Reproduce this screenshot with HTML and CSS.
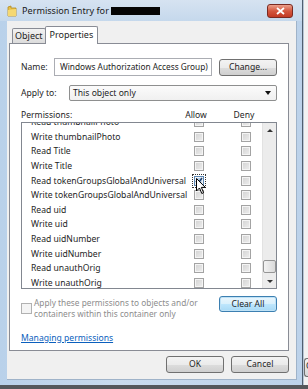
FILE: index.html
```html
<!DOCTYPE html>
<html lang="en">
<head>
  <meta charset="UTF-8">
  <title>Permission Entry</title>
  <link rel="stylesheet" href="styles.css">
</head>
<body>
  <div class="screen">
    <div class="window">
      <div class="titlebar">
        <svg class="folder" width="10" height="12" viewBox="0 0 10 12">
          <path d="M1 2 L4 1 L4 3 L9 3 L9 11 L1 11 Z" fill="#e8c14a" stroke="#b48a1e" stroke-width="0.8"/>
          <path d="M1 5 L9 4 L9 11 L1 11 Z" fill="#f5d872"/>
        </svg>
        <span class="title">Permission Entry for</span>
        <span class="redacted"></span>
        <span class="close">
          <svg width="9" height="8" viewBox="0 0 9 8"><path d="M1 1 L8 7 M8 1 L1 7" stroke="#fff" stroke-width="1.8"/></svg>
        </span>
      </div>

      <div class="client">
        <div class="tabs">
          <span class="tab">Object</span>
          <span class="tab active">Properties</span>
        </div>

        <div class="panel">
          <div class="row name-row">
            <span class="label">Name:</span>
            <span class="textbox">Windows Authorization Access Group)</span>
            <span class="btn change">Change...</span>
          </div>

          <div class="row apply-row">
            <span class="label">Apply to:</span>
            <span class="combo">This object only<i class="arrow"></i></span>
          </div>

          <div class="perm-head">
            <span>Permissions:</span>
            <span class="col">Allow</span>
            <span class="col">Deny</span>
          </div>

          <div class="listbox">
            <div class="items">
              <div class="item first"><span class="pname">Read thumbnailPhoto</span><i class="cb"></i><i class="cb deny"></i></div>
              <div class="item"><span class="pname">Write thumbnailPhoto</span><i class="cb"></i><i class="cb deny"></i></div>
              <div class="item"><span class="pname">Read Title</span><i class="cb"></i><i class="cb deny"></i></div>
              <div class="item"><span class="pname">Write Title</span><i class="cb"></i><i class="cb deny"></i></div>
              <div class="item"><span class="pname">Read tokenGroupsGlobalAndUniversal</span><i class="cb checked"><svg width="8" height="8" viewBox="0 0 8 8"><path d="M1 4 L3 6.5 L7 1" fill="none" stroke="#1c3d6b" stroke-width="1.5"/></svg><svg class="cursor" width="10" height="17" viewBox="0 0 10 17"><path d="M0.5 0.5 L0.5 13 L3.5 10 L5.8 15.5 L7.6 14.7 L5.4 9.4 L9.3 9.4 Z" fill="#fff" stroke="#000" stroke-width="1"/></svg></i><i class="cb deny"></i></div>
              <div class="item"><span class="pname">Write tokenGroupsGlobalAndUniversal</span><i class="cb"></i><i class="cb deny"></i></div>
              <div class="item"><span class="pname">Read uid</span><i class="cb"></i><i class="cb deny"></i></div>
              <div class="item"><span class="pname">Write uid</span><i class="cb"></i><i class="cb deny"></i></div>
              <div class="item"><span class="pname">Read uidNumber</span><i class="cb"></i><i class="cb deny"></i></div>
              <div class="item"><span class="pname">Write uidNumber</span><i class="cb"></i><i class="cb deny"></i></div>
              <div class="item"><span class="pname">Read unauthOrig</span><i class="cb"></i><i class="cb deny"></i></div>
              <div class="item"><span class="pname">Write unauthOrig</span><i class="cb"></i><i class="cb deny"></i></div>
            </div>
            <div class="scrollbar">
              <span class="sb-btn"><i class="up"></i></span>
              <span class="track"><span class="thumb"></span></span>
              <span class="sb-btn"><i class="down"></i></span>
            </div>
          </div>

          <div class="row bottom-row">
            <i class="cb big"></i>
            <span class="apply-text">Apply these permissions to objects and/or<br>containers within this container only</span>
            <span class="btn clear">Clear All</span>
          </div>

          <a class="link" href="#">Managing permissions</a>
        </div>

        <div class="buttons">
          <span class="btn">OK</span>
          <span class="btn">Cancel</span>
        </div>
      </div>
    </div>
    <div class="behind">
      <span class="behind-btn">C</span>
    </div>
  </div>
</body>
</html>
```

FILE: styles.css
```css
body {
  margin: 0;
  width: 308px;
  height: 389px;
  overflow: hidden;
  background: #55585c;
  font-family: "Noto Sans", sans-serif;
  font-size: 8.6px;
  color: #1e1e1e;
}

.screen {
  display: flex;
  height: 385px;
}

/* window frame */
.window {
  width: 303px;
  box-sizing: border-box;
  padding: 0 5px 5px 7px;
  background: linear-gradient(to right, #b9d1ea, #c9dbee 40%, #bcd2ea);
  border-right: 1px solid #4f5f70;
  display: flex;
  flex-direction: column;
}

.titlebar {
  height: 21px;
  display: flex;
  align-items: center;
  margin-left: -7px;
  padding-left: 7px;
  margin-right: -5px;
  padding-right: 9px;
  background: linear-gradient(to bottom, #d6e3f1, #c5d8ec);
}

.folder {
  margin-right: 5px;
}

.title {
  font-size: 9.1px;
  color: #1a1a1a;
}

.redacted {
  width: 49px;
  height: 8px;
  margin-left: 2px;
  margin-top: 1px;
  background: #050505;
}

.close {
  margin-left: auto;
  width: 24px;
  height: 12px;
  border: 1px solid #7a2a22;
  border-radius: 3px;
  background: linear-gradient(to bottom, #eba08c, #d4573f 50%, #c23a24);
  display: flex;
  align-items: center;
  justify-content: center;
}

.client {
  flex: 1;
  background: #f0f0f0;
  display: flex;
  flex-direction: column;
  padding: 5px 7px 0 2px;
  border: 1px solid #9fb3c9;
  border-width: 0 1px 1px 0;
}

/* tabs */
.tabs {
  display: flex;
  align-items: flex-end;
  padding-left: 3px;
  height: 17px;
}

.tab {
  height: 15px;
  box-sizing: border-box;
  padding: 0 2px;
  border: 1px solid #898c95;
  border-bottom: none;
  background: linear-gradient(to bottom, #f2f2f2, #dcdcdc);
  line-height: 14px;
  border-radius: 2px 2px 0 0;
  font-size: 9px;
}

.tab.active {
  height: 18px;
  margin-bottom: -1px;
  margin-left: -1px;
  padding: 0 4px;
  background: #fff;
  line-height: 15px;
  position: relative;
}

.panel {
  height: 308px;
  box-sizing: border-box;
  background: #fff;
  border: 1px solid #898c95;
  padding: 14px 11px 0 11px;
  display: flex;
  flex-direction: column;
}

.row {
  display: flex;
  align-items: center;
}

.name-row {
  height: 18px;
}

.name-row .label {
  width: 33px;
}

.textbox {
  width: 158px;
  height: 18px;
  box-sizing: border-box;
  border: 1px solid #abadb3;
  padding-left: 5px;
  line-height: 16px;
  white-space: nowrap;
  overflow: hidden;
  font-size: 8.3px;
}

.btn {
  width: 58px;
  height: 17px;
  box-sizing: border-box;
  border: 1px solid #707070;
  border-radius: 3px;
  background: linear-gradient(to bottom, #f3f3f3, #ebebeb 50%, #dddddd 51%, #cfcfcf);
  text-align: center;
  line-height: 15px;
}

.change {
  margin-left: 7px;
}

.apply-row {
  margin-top: 9px;
  height: 16px;
}

.apply-row .label {
  width: 48px;
}

.combo {
  flex: 1;
  height: 16px;
  box-sizing: border-box;
  border: 1px solid #8e8f8f;
  border-radius: 2px;
  background: linear-gradient(to bottom, #fbfbfb, #f0f0f0);
  padding-left: 3px;
  line-height: 14px;
  display: flex;
}

.combo .arrow {
  margin-left: auto;
  margin-right: 5px;
  margin-top: 5px;
  width: 0;
  height: 0;
  border-left: 3.5px solid transparent;
  border-right: 3.5px solid transparent;
  border-top: 4px solid #111;
}

.perm-head {
  margin-top: 8px;
  height: 12px;
  line-height: 12px;
  display: grid;
  grid-template-columns: 151px 48px 48px;
}

.perm-head .col {
  text-align: center;
}

/* permission list */
.listbox {
  margin-top: 1px;
  height: 167px;
  box-sizing: border-box;
  border: 1px solid #828790;
  display: flex;
  overflow: hidden;
}

.items {
  flex: 1;
  overflow: hidden;
}

.item {
  height: 14.6px;
  display: flex;
  align-items: center;
  padding-left: 9px;
  white-space: nowrap;
}

.item.first {
  margin-top: -8px;
}

.pname {
  width: 163px;
  flex: none;
}

.cb {
  width: 10px;
  height: 10px;
  box-sizing: border-box;
  flex: none;
  border: 1px solid #a3a3a3;
  background: linear-gradient(135deg, #d2d2d2, #eeeeee);
  box-shadow: inset 0 0 0 1px #f4f4f4;
}

.cb.deny {
  margin-left: 37px;
}

.cb.checked {
  position: relative;
  background: linear-gradient(135deg, #9fc2e6, #dceaf8);
  border-color: #5a86b4;
  outline: 1px dotted #333;
  outline-offset: 1px;
}

.cb.checked svg {
  display: block;
}

.cb.checked .cursor {
  position: absolute;
  left: 1px;
  top: 1px;
}

.scrollbar {
  width: 13px;
  flex: none;
  background: #ececec;
  border-left: 1px solid #e2e2e2;
  display: flex;
  flex-direction: column;
}

.sb-btn {
  height: 14px;
  display: flex;
  align-items: center;
  justify-content: center;
}

.up {
  border-left: 3px solid transparent;
  border-right: 3px solid transparent;
  border-bottom: 3px solid #333;
}

.down {
  border-left: 3px solid transparent;
  border-right: 3px solid transparent;
  border-top: 3px solid #333;
}

.track {
  flex: 1;
  display: flex;
  flex-direction: column;
  justify-content: flex-end;
}

.thumb {
  height: 13px;
  margin: 0 0 1px 0;
  box-sizing: border-box;
  border: 1px solid #959595;
  border-radius: 2px;
  background: linear-gradient(to right, #f3f3f3, #dadada);
}

.bottom-row {
  margin-top: 7px;
  align-items: flex-start;
}

.cb.big {
  width: 11px;
  height: 11px;
  margin-top: 7px;
  border-color: #b1b1b1;
  background: #f4f4f4;
}

.apply-text {
  margin-left: 2px;
  margin-top: 2px;
  line-height: 10.5px;
  font-size: 8.3px;
  color: #8d8d8d;
  white-space: nowrap;
}

.clear {
  margin-left: auto;
  height: 16px;
  border-color: #3c7fb1;
  box-shadow: inset 0 0 0 1px #bfe2f6;
  background: linear-gradient(to bottom, #eaf6fd, #d9f0fc 50%, #bee6fd 51%, #a7d9f5);
  line-height: 14px;
}

.link {
  margin-top: 13px;
  color: #0b5fbd;
  text-decoration: underline;
  align-self: flex-start;
}

.buttons {
  display: flex;
  justify-content: flex-end;
  gap: 7px;
  margin-top: 5px;
}

/* window behind */
.behind {
  flex: 1;
  background: #f2f2f2;
  border-left: 1px solid #b8c6d6;
  display: flex;
  flex-direction: column;
  justify-content: flex-end;
  padding-bottom: 8px;
}

.behind-btn {
  height: 17px;
  border: 1px solid #707070;
  border-right: none;
  border-radius: 3px 0 0 3px;
  background: linear-gradient(to bottom, #f3f3f3, #d5d5d5);
  padding-left: 1px;
  line-height: 15px;
  overflow: hidden;
}
```
